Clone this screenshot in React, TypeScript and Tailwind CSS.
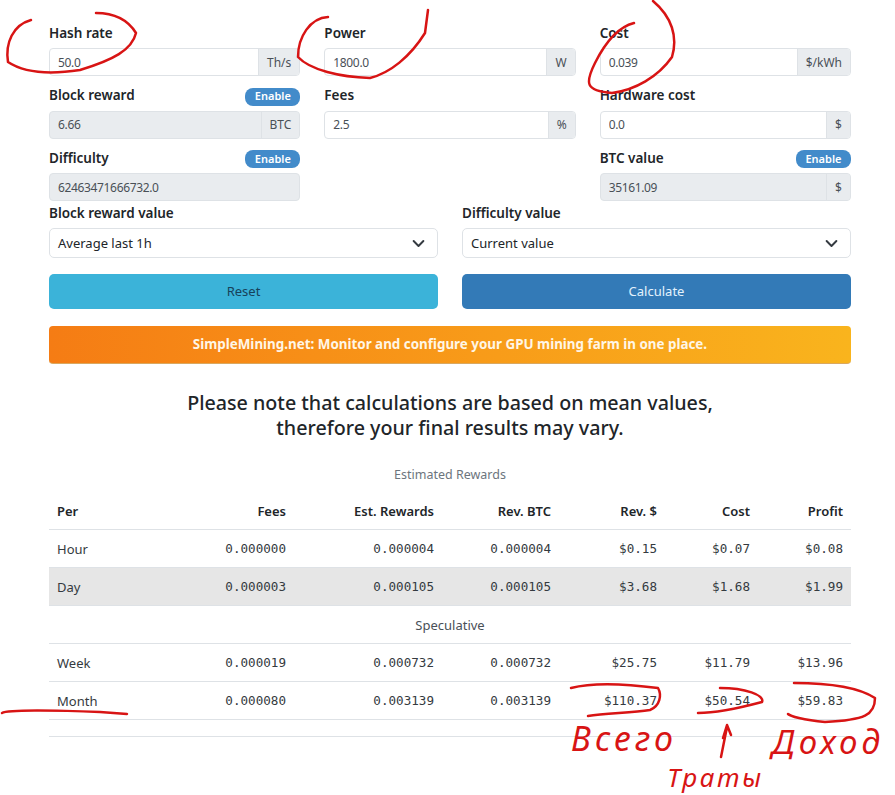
import React from 'react';

const sans = 'font-["Noto_Sans",sans-serif]';

interface FieldProps {
    label: string;
    value: string;
    unit?: string;
    disabled?: boolean;
    toggle?: boolean;
}

const fields: (FieldProps | null)[] = [
    { label: 'Hash rate', value: '50.0', unit: 'Th/s' },
    { label: 'Power', value: '1800.0', unit: 'W' },
    { label: 'Cost', value: '0.039', unit: '$/kWh' },
    { label: 'Block reward', value: '6.66', unit: 'BTC', disabled: true, toggle: true },
    { label: 'Fees', value: '2.5', unit: '%' },
    { label: 'Hardware cost', value: '0.0', unit: '$' },
    { label: 'Difficulty', value: '62463471666732.0', disabled: true, toggle: true },
    null,
    { label: 'BTC value', value: '35161.09', unit: '$', disabled: true, toggle: true },
];

const rows = [
    ['Hour', '0.000000', '0.000004', '0.000004', '$0.15', '$0.07', '$0.08'],
    ['Day', '0.000003', '0.000105', '0.000105', '$3.68', '$1.68', '$1.99'],
];

const speculative = [
    ['Week', '0.000019', '0.000732', '0.000732', '$25.75', '$11.79', '$13.96'],
    ['Month', '0.000080', '0.003139', '0.003139', '$110.37', '$50.54', '$59.83'],
];

const headers = ['Per', 'Fees', 'Est. Rewards', 'Rev. BTC', 'Rev. $', 'Cost', 'Profit'];
const widths = ['w-[100px]', 'w-[145px]', 'w-[148px]', 'w-[117px]', 'w-[106px]', 'w-[93px]', 'w-[93px]'];

// red marker strokes someone drew over the screenshot
const strokes = [
    'M31 20C13 25 5 43 8 62C23 72 47 75 80 70C113 60 132 50 136 33C128 20 115 13 96 13',
    'M328 17C310 18 298 37 298 57C310 70 340 77 370 78C390 73 410 57 425 33L428 10',
    'M634 23C618 27 605 43 595 63C585 83 585 91 612 93C635 90 658 77 672 57C678 37 672 17 653 1',
    'M2 713C7 710 50 710 100 712L127 714',
    'M571 688C590 683 620 683 658 688C662 695 660 706 650 710C630 713 605 713 588 716',
    'M720 688C745 688 765 695 762 702C732 710 712 713 698 713',
    'M794 683C828 683 858 687 875 698C875 715 865 720 825 722C803 720 790 716 788 714',
    'M721 757L727 727M723 738L727 725L731 735',
];

const Field = ({ label, value, unit, disabled, toggle }: FieldProps) => (
    <div>
        <div className="flex h-5 items-center justify-between">
            <span className="text-[13.5px] font-semibold text-[#212529]">{label}</span>
            {toggle && (
                <span className="mt-[2px] flex h-[18px] w-[55px] items-center justify-center rounded-[8px] bg-[#428bca] text-[11px] font-semibold text-white">
                    Enable
                </span>
            )}
        </div>
        <div className={`mt-[5px] flex h-[28px] overflow-hidden rounded-[4px] border border-[#dee2e6] ${disabled ? 'bg-[#e9ecef]' : 'bg-white'}`}>
            <input
                readOnly
                value={value}
                className="min-w-0 flex-1 bg-transparent px-2 pt-px text-[12px] tracking-[-0.35px] text-[#495057] outline-none"
            />
            {unit && (
                <span className="flex items-center border-l border-[#dee2e6] bg-[#e9ecef] px-2 pt-px text-[12px] text-[#495057]">
                    {unit}
                </span>
            )}
        </div>
    </div>
);

const SelectBox = ({ label, value }: { label: string; value: string }) => (
    <div>
        <div className="flex h-5 items-center text-[13.5px] font-semibold text-[#212529]">{label}</div>
        <div className="mt-[5px] flex h-[30px] items-center justify-between rounded-[5px] border border-[#dee2e6] bg-white pl-2 pr-3 pt-px text-[13px] text-[#212529]">
            {value}
            <svg width="13" height="13" viewBox="0 0 16 16" fill="none" stroke="#343a40" strokeWidth="2.4" strokeLinecap="round" strokeLinejoin="round">
                <path d="m2 5 6 6 6-6" />
            </svg>
        </div>
    </div>
);

const DataRow = ({ cells, shaded }: { cells: string[]; shaded?: boolean }) => (
    <tr className={`h-[38px] border-b border-[#dee2e6] ${shaded ? 'bg-[#e6e6e6]' : ''}`}>
        {cells.map((cell, i) => (
            <td
                key={i}
                className={i === 0
                    ? 'px-2 pt-[4px] text-left text-[13px] text-[#343a40]'
                    : 'px-2 pt-[2px] text-right font-["DejaVu_Sans_Mono",monospace] text-[12.6px] text-[#343a40]'}
            >
                {cell}
            </td>
        ))}
    </tr>
);

export default function App() {
    return (
        <div className={`relative h-[795px] w-[895px] overflow-hidden bg-white pb-0 pl-[49px] pr-[44px] pt-[23px] ${sans}`}>
            <div className="grid grid-cols-3 gap-x-6 gap-y-[9.5px]">
                {fields.map((field, i) => (field ? <Field key={field.label} {...field} /> : <div key={i} />))}
            </div>

            <div className="mt-[2px] grid grid-cols-2 gap-x-6">
                <SelectBox label="Block reward value" value="Average last 1h" />
                <SelectBox label="Difficulty value" value="Current value" />
            </div>

            <div className="mt-4 grid grid-cols-2 gap-x-6">
                <button className="h-[35px] rounded-[5px] bg-[#3bb3d9] pt-px text-[13px] text-[#17425a]">Reset</button>
                <button className="h-[35px] rounded-[5px] bg-[#337ab7] pt-px text-[13px] text-[#e3f2fd]">Calculate</button>
            </div>

            <div className="mt-[17px] flex h-[38px] items-center justify-center rounded-[4px] border-b border-[#d9a860] bg-gradient-to-r from-[#f57c14] to-[#f9b41d] text-[13.4px] font-bold text-[#fff6e6]">
                SimpleMining.net: Monitor and configure your GPU mining farm in one place.
            </div>

            <h2 className="mt-[26px] text-center text-[19.7px] font-medium leading-[25px] text-[#212529]">
                Please note that calculations are based on mean values,
                <br />
                therefore your final results may vary.
            </h2>

            <div className="mt-[25px] h-5 text-center text-[12.5px] leading-5 text-[#6c757d]">Estimated Rewards</div>

            <table className="mt-[8px] w-full table-fixed border-collapse">
                <thead>
                    <tr className="h-[36px] border-b border-[#dee2e6]">
                        {headers.map((h, i) => (
                            <th
                                key={h}
                                className={`${widths[i]} px-2 pt-px text-[13px] font-semibold text-[#212529] ${i === 0 ? 'text-left' : 'text-right'}`}
                            >
                                {h}
                            </th>
                        ))}
                    </tr>
                </thead>
                <tbody>
                    {rows.map((r, i) => <DataRow key={r[0]} cells={r} shaded={i === 1} />)}
                    <tr className="h-[38px] border-b border-[#dee2e6]">
                        <td colSpan={7} className="pt-[4px] text-center text-[13px] text-[#495057]">Speculative</td>
                    </tr>
                    {speculative.map((r) => <DataRow key={r[0]} cells={r} />)}
                    <tr className="h-[17px] border-b border-[#dee2e6]">
                        <td colSpan={7} />
                    </tr>
                </tbody>
            </table>

            {/* annotations on top of the page */}
            <svg className="pointer-events-none absolute left-0 top-0" width="895" height="795" fill="none" stroke="#d81414" strokeWidth="2.5" strokeLinecap="round" strokeLinejoin="round">
                {strokes.map((d) => <path key={d} d={d} />)}
            </svg>
            <span className="absolute left-[571px] top-[718px] text-[34px] italic leading-[40px] tracking-[4px] text-[#d81414]">Всего</span>
            <span className="absolute left-[667px] top-[762px] text-[26px] italic leading-[30px] tracking-[2.5px] text-[#d81414]">Траты</span>
            <span className="absolute left-[772px] top-[722px] text-[33px] italic leading-[40px] tracking-[4px] text-[#d81414]">Доход</span>
        </div>
    );
}
